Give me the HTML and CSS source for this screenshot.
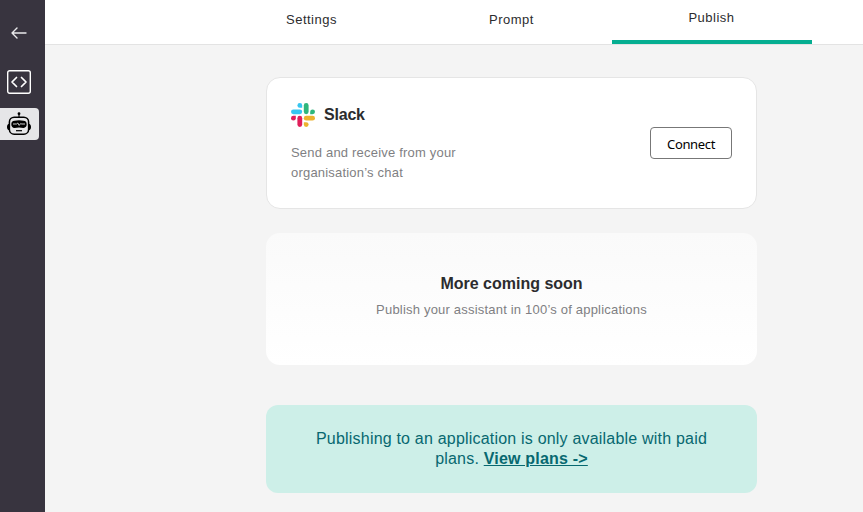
FILE: index.html
```html
<!DOCTYPE html>
<html lang="en">
<head>
<meta charset="utf-8">
<title>Publish</title>
<link rel="stylesheet" href="styles.css">
</head>
<body>
<aside class="sidebar">
  <a class="side-item back"><svg width="16" height="12" viewBox="0 0 16 12" fill="none" stroke="#e9e9eb" stroke-width="1.4" stroke-linecap="round" stroke-linejoin="round"><path d="M15 6H1M6 1 1 6l5 5"/></svg></a>
  <a class="side-item code"><svg width="24" height="24" viewBox="0 0 24 24" fill="none" stroke="#fff" stroke-linecap="round" stroke-linejoin="round"><rect x=".7" y=".7" width="22.6" height="22.6" rx="2" stroke-width="1.4"/><path d="M9.500 7.500 5 12l4.500 4.500M14.500 7.500 19 12l-4.500 4.500" stroke-width="1.700"/></svg></a>
  <a class="side-item active"><svg width="24" height="24" viewBox="0 0 24 24"><circle cx="12" cy="1.700" r="1.400"/><path d="M12 2v3" stroke="#000" stroke-width="1.200"/><rect x="2.400" y="5.200" width="19.200" height="17" rx="4.800" fill="none" stroke="#000" stroke-width="1.500"/><path d="M2.500 11.800C.7 12 0 13 0 15s.7 3 2.500 3.200zM21.500 11.800c1.800.2 2.500 1.200 2.500 3.200s-.7 3-2.500 3.200z"/><path d="M7.500 8.700q4.500-.8 9 0Q19.700 9 19.700 12.200T16.500 16q-4.500-1-9 0Q4.300 15.500 4.300 12.200t3.200-3.500z"/><path d="M6 12h3.500l1.300-1 1.400 2.400 1.500-1.900 1 .5H18" fill="none" stroke="#e6e6e8" stroke-width=".9"/><path d="M9 18.700h6" stroke="#000" stroke-width="1.200"/></svg></a>
</aside>
<div class="page">
  <nav class="tabs">
    <a class="tab">Settings</a>
    <a class="tab">Prompt</a>
    <a class="tab selected">Publish</a>
  </nav>
  <main class="content">
    <section class="card slack">
      <div class="info">
        <h2 class="title"><svg width="24" height="24" viewBox="0 0 24 24"><g fill="#36c5f0"><path d="M8.800 0a2.400 2.400 0 1 0 0 4.800h2.400V2.400A2.400 2.400 0 0 0 8.800 0z"/><rect y="6.400" width="11.200" height="4.800" rx="2.400"/></g><g fill="#2eb67d"><rect x="12.800" width="4.800" height="11.200" rx="2.400"/><path d="M24 8.800a2.400 2.400 0 1 0-4.800 0v2.400h2.400A2.400 2.400 0 0 0 24 8.800z"/></g><g fill="#ecb22e"><rect x="12.800" y="12.800" width="11.200" height="4.800" rx="2.400"/><path d="M15.200 24a2.400 2.400 0 1 0 0-4.800h-2.400v2.400a2.400 2.400 0 0 0 2.400 2.400z"/></g><g fill="#e01e5a"><rect x="6.400" y="12.800" width="4.800" height="11.200" rx="2.400"/><path d="M0 15.200a2.400 2.400 0 1 0 4.800 0v-2.400H2.400A2.400 2.400 0 0 0 0 15.200z"/></g></svg><span class="name">Slack</span></h2>
        <p class="text">Send and receive from your organisation’s chat</p>
      </div>
      <button class="connect">Connect</button>
    </section>
    <section class="card soon">
      <h2 class="title">More coming soon</h2>
      <p class="text">Publish your assistant in 100’s of applications</p>
    </section>
    <section class="notice">Publishing to an application is only available with paid plans. <a class="plans">View plans -&gt;</a></section>
  </main>
</div>
</body>
</html>
```
FILE: styles.css
```css
* { box-sizing: border-box; }
body {
  margin: 0;
  display: flex;
  height: 512px;
  overflow: hidden;
  background: #f4f4f4;
  font-family: "Liberation Sans", Arial, sans-serif;
  color: #2c2c2e;
}
h2, p { margin: 0; }
svg { display: block; flex: none; }
.sidebar {
  width: 45px;
  flex: none;
  background: #38343f;
  padding-top: 17px;
}
.side-item {
  display: flex;
  align-items: center;
  width: 39px;
  height: 32px;
  padding-left: 7px;
}
.back { padding-left: 11px; margin-bottom: 17px; }
.code { margin-bottom: 10px; }
.active { background: #e6e6e8; border-radius: 0 4px 4px 0; }
.page { flex: 1; }
.tabs {
  display: flex;
  height: 45px;
  padding-left: 167px;
  background: #fff;
  border-bottom: 1px solid #e3e3e3;
}
.tab {
  width: 200px;
  height: 44px;
  padding: 12px 1px 0 0;
  text-align: center;
  font-size: 13px;
  line-height: 16px;
  letter-spacing: 0.5px;
}
.selected { padding-top: 10px; border-bottom: 4px solid #05ae91; }
.content {
  width: 491px;
  margin: 32px 0 0 221px;
}
.card { height: 132px; border-radius: 14px; }
.slack {
  display: flex;
  align-items: center;
  justify-content: space-between;
  padding: 0 24px;
  background: #fff;
  border: 1px solid #e5e5e5;
}
.info { width: 200px; }
.title {
  display: flex;
  align-items: center;
  gap: 9px;
  font-size: 16px;
  line-height: 24px;
  font-weight: 700;
}
.name { letter-spacing: -0.2px; }
.text {
  color: #7f7f83;
  font-size: 13px;
  line-height: 20px;
  letter-spacing: 0.2px;
}
.slack .text { margin-top: 16px; }
.connect {
  width: 82px;
  height: 32px;
  padding: 2px 0 0;
  border: 1px solid #777;
  border-radius: 4px;
  background: #fff;
  color: #000;
  font: 13px "Noto Sans", sans-serif;
  letter-spacing: -0.35px;
}
.soon {
  display: flex;
  flex-direction: column;
  align-items: center;
  margin-top: 24px;
  padding-top: 39px;
  background: linear-gradient(#fafafa, #fff);
}
.soon .text { margin-top: 4px; }
.notice {
  height: 88px;
  margin-top: 40px;
  padding: 24px 48px;
  border-radius: 12px;
  background: #cdefe8;
  color: #076870;
  font-size: 16px;
  line-height: 20px;
  letter-spacing: 0.2px;
  text-align: center;
}
.plans { font-weight: 700; text-decoration: underline; }
```
